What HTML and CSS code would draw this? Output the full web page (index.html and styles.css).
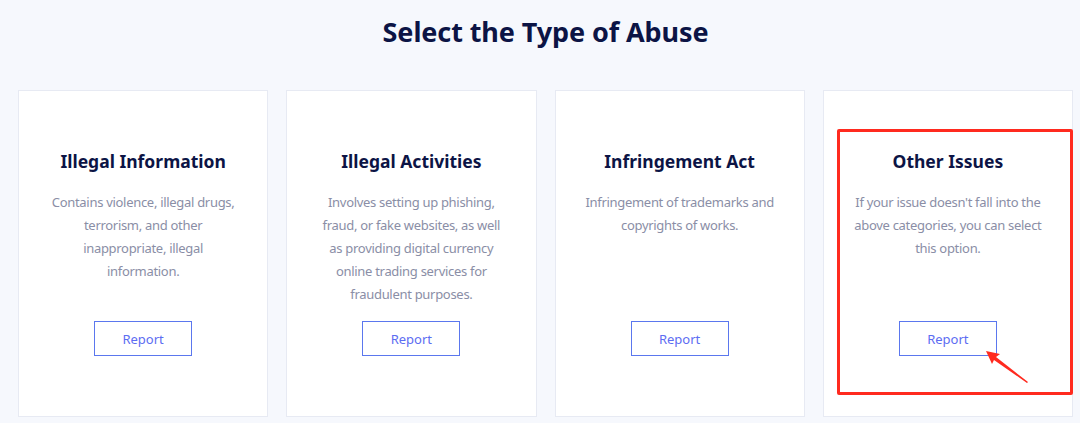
FILE: index.html
```html
<!DOCTYPE html>
<html lang="en">
<head>
<meta charset="utf-8">
<title>Select the Type of Abuse</title>
<link rel="stylesheet" href="styles.css">
</head>
<body>
<main class="page">
  <h1 class="page-title">Select the Type of Abuse</h1>
  <section class="cards">
    <article class="card">
      <h2 class="card-title">Illegal Information</h2>
      <p class="card-desc">Contains violence, illegal drugs, terrorism, and other inappropriate, illegal information.</p>
      <button class="report-btn">Report</button>
    </article>
    <article class="card">
      <h2 class="card-title">Illegal Activities</h2>
      <p class="card-desc">Involves setting up phishing, fraud, or fake websites, as well as providing digital currency online trading services for fraudulent purposes.</p>
      <button class="report-btn">Report</button>
    </article>
    <article class="card">
      <h2 class="card-title">Infringement Act</h2>
      <p class="card-desc">Infringement of trademarks and copyrights of works.</p>
      <button class="report-btn">Report</button>
    </article>
    <article class="card card-highlight">
      <h2 class="card-title">Other Issues</h2>
      <p class="card-desc">If your issue doesn't fall into the above categories, you can select this option.</p>
      <button class="report-btn">Report</button>
      <div class="annot-box"></div>
      <svg class="annot-arrow" width="50" height="40" viewBox="0 0 50 40">
        <polygon points="2,2 16,5 12,8 44,33 43,34 10,11 8,15" fill="#ff2a1f"/>
      </svg>
    </article>
  </section>
</main>
</body>
</html>
```

FILE: styles.css
```css
* { box-sizing: border-box; }
html, body {
  margin: 0;
  padding: 0;
  background: #f6f8fd;
}
body {
  font-family: "Noto Sans", "Open Sans", sans-serif;
  width: 1080px;
  height: 423px;
  overflow: hidden;
}
.page {
  padding: 12px 7px 0 18px;
}
.page-title {
  margin: 0;
  text-align: center;
  font-size: 27px;
  line-height: 40px;
  font-weight: 700;
  color: #0c1445;
  letter-spacing: -0.1px;
}
.cards {
  margin-top: 38px;
  display: grid;
  grid-template-columns: repeat(4, 1fr);
  gap: 18px;
}
.card {
  position: relative;
  height: 327px;
  background: #ffffff;
  border: 1px solid #e7eaf3;
  display: flex;
  flex-direction: column;
  align-items: center;
  padding: 57px 29px 60px;
  text-align: center;
}
.card-title {
  margin: 0;
  font-size: 17.5px;
  line-height: 26px;
  font-weight: 700;
  color: #0c1445;
}
.card-desc {
  margin: 17px 0 0;
  flex: 1;
  font-size: 13px;
  line-height: 23px;
  letter-spacing: -0.3px;
  color: #8a8ea6;
}
.report-btn {
  width: 98px;
  height: 35px;
  background: #ffffff;
  border: 1px solid #5b77ee;
  color: #5d6df2;
  font-family: inherit;
  font-size: 13px;
  padding: 0;
  cursor: pointer;
}
.annot-box {
  position: absolute;
  left: 13px;
  top: 38px;
  width: 236px;
  height: 266px;
  border: 3px solid #ff2a1f;
  border-radius: 2px;
  pointer-events: none;
}
.annot-arrow {
  position: absolute;
  left: 160px;
  top: 258px;
  pointer-events: none;
}
```
